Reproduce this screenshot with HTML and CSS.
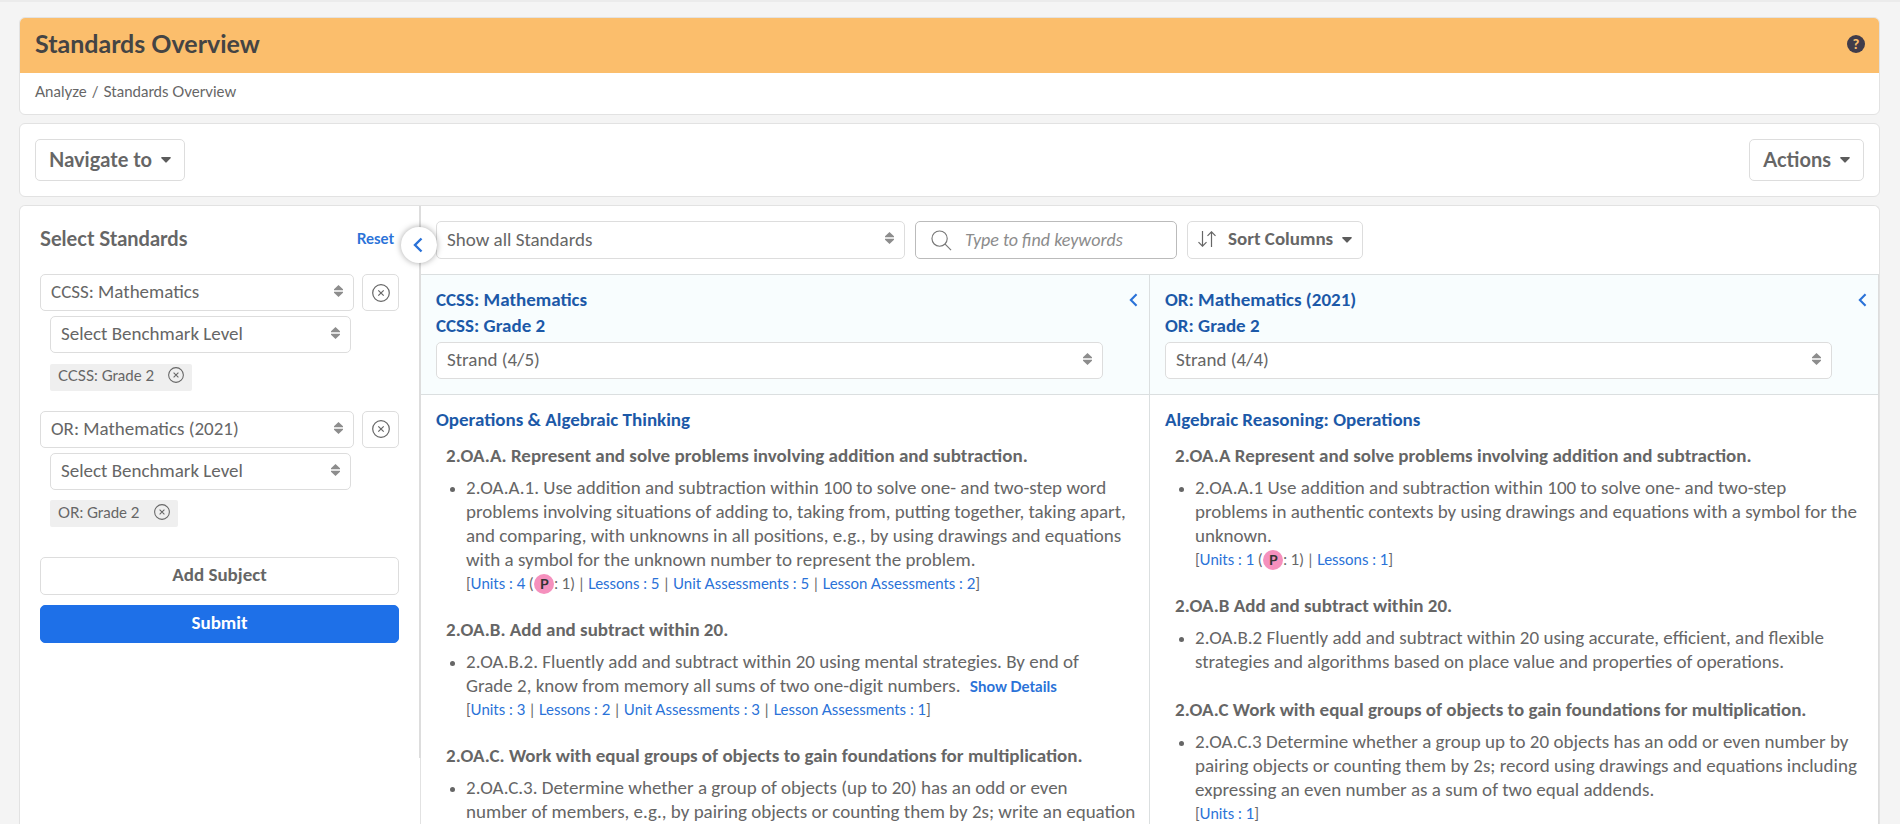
FILE: index.html
```html
<!DOCTYPE html>
<html lang="en">
<head>
<meta charset="utf-8">
<title>Standards Overview</title>
<link rel="stylesheet" href="styles.css">
</head>
<body>
<svg class="defs" aria-hidden="true">
  <symbol id="sort" viewBox="0 0 9 12"><path d="M4.500 0 9 4.200V5.200H0V4.200ZM0 6.800H9V7.800L4.500 12 0 7.800Z" fill="#8d8d8d"/></symbol>
  <symbol id="caret" viewBox="0 0 10 6"><path d="M0.800 0H9.200Q10.300 0.200 9.500 1.200L5.700 5.300Q5 6 4.300 5.300L0.500 1.200Q-0.300 0.200 0.800 0Z" fill="#5c5c5c"/></symbol>
  <symbol id="left" viewBox="0 0 10 16"><path d="M8.500 1.500 2 8 8.500 14.500" fill="none" stroke="#2a72d8" stroke-width="2.400"/></symbol>
  <symbol id="close" viewBox="0 0 18 18"><circle cx="9" cy="9" r="8.300" fill="none" stroke="#666" stroke-width="1.200"/><path d="M6.300 6.300 11.700 11.700M11.700 6.300 6.300 11.700" stroke="#666" stroke-width="1.200"/></symbol>
</svg>
<main class="page">
  <header class="card">
    <div class="title-bar">
      <h1>Standards Overview</h1>
      <button class="help" aria-label="Help">?</button>
    </div>
    <nav class="crumbs"><a href="#">Analyze</a><span>/</span><span>Standards Overview</span></nav>
  </header>

  <section class="card actions">
    <button class="btn btn-large">Navigate to <svg class="caret"><use href="#caret"/></svg></button>
    <button class="btn btn-large">Actions <svg class="caret"><use href="#caret"/></svg></button>
  </section>

  <section class="card workspace">
    <aside class="sidebar">
      <button class="collapse" aria-label="Collapse panel"><svg class="chev"><use href="#left"/></svg></button>
      <div class="side-head"><h2>Select Standards</h2><a href="#">Reset</a></div>
      <div class="subject">
        <div class="subject-row">
          <div class="select"><select aria-label="Subject 1"><option>CCSS: Mathematics</option></select><svg><use href="#sort"/></svg></div>
          <button class="btn remove" aria-label="Remove subject"><svg><use href="#close"/></svg></button>
        </div>
        <div class="select level"><select aria-label="Benchmark level 1"><option>Select Benchmark Level</option></select><svg><use href="#sort"/></svg></div>
        <div class="tag">CCSS: Grade 2 <button aria-label="Remove CCSS: Grade 2"><svg><use href="#close"/></svg></button></div>
      </div>
      <div class="subject">
        <div class="subject-row">
          <div class="select"><select aria-label="Subject 2"><option>OR: Mathematics (2021)</option></select><svg><use href="#sort"/></svg></div>
          <button class="btn remove" aria-label="Remove subject"><svg><use href="#close"/></svg></button>
        </div>
        <div class="select level"><select aria-label="Benchmark level 2"><option>Select Benchmark Level</option></select><svg><use href="#sort"/></svg></div>
        <div class="tag">OR: Grade 2 <button aria-label="Remove OR: Grade 2"><svg><use href="#close"/></svg></button></div>
      </div>
      <div class="side-buttons">
        <button class="btn">Add Subject</button>
        <button class="btn primary">Submit</button>
      </div>
    </aside>

    <div class="content">
      <div class="toolbar">
        <div class="select filter"><select aria-label="Filter standards"><option>Show all Standards</option></select><svg><use href="#sort"/></svg></div>
        <label class="search">
          <svg viewBox="0 0 22 22"><circle cx="9" cy="9" r="8" fill="none" stroke="#777" stroke-width="1.200"/><path d="M14.800 14.800 21 21" stroke="#777" stroke-width="1.200"/></svg>
          <input type="text" placeholder="Type to find keywords" aria-label="Find keywords">
        </label>
        <button class="btn sort-btn">
          <svg class="updown" viewBox="0 0 18 16"><path d="M4.500 0V15M0.500 11.200 4.500 15.200 8.500 11.200M13.500 16V1M9.500 4.800 13.500 0.800 17.500 4.800" fill="none" stroke="#666" stroke-width="1.200"/></svg>
          Sort Columns <svg class="caret"><use href="#caret"/></svg>
        </button>
      </div>

      <div class="columns">
        <section class="column">
          <div class="col-head">
            <div class="col-title"><h3>CCSS: Mathematics<br>CCSS: Grade 2</h3><button aria-label="Collapse column"><svg class="chev-sm"><use href="#left"/></svg></button></div>
            <div class="select strand"><select aria-label="CCSS strand"><option>Strand (4/5)</option></select><svg><use href="#sort"/></svg></div>
          </div>
          <div class="col-body">
            <h3>Operations &amp; Algebraic Thinking</h3>
            <h4>2.OA.A. Represent and solve problems involving addition and subtraction.</h4>
            <ul><li>2.OA.A.1. Use addition and subtraction within 100 to solve one- and two-step word problems involving situations of adding to, taking from, putting together, taking apart, and comparing, with unknowns in all positions, e.g., by using drawings and equations with a symbol for the unknown number to represent the problem.
              <p class="links">[<a href="#">Units : 4</a> (<b class="badge">P</b>: 1) <i>|</i> <a href="#">Lessons : 5</a> <i>|</i> <a href="#">Unit Assessments : 5</a> <i>|</i> <a href="#">Lesson Assessments : 2</a>]</p></li></ul>
            <h4>2.OA.B. Add and subtract within 20.</h4>
            <ul><li>2.OA.B.2. Fluently add and subtract within 20 using mental strategies. By end of Grade&nbsp;2, know from memory all sums of two one-digit numbers. <a class="details" href="#">Show Details</a>
              <p class="links">[<a href="#">Units : 3</a> <i>|</i> <a href="#">Lessons : 2</a> <i>|</i> <a href="#">Unit Assessments : 3</a> <i>|</i> <a href="#">Lesson Assessments : 1</a>]</p></li></ul>
            <h4>2.OA.C. Work with equal groups of objects to gain foundations for multiplication.</h4>
            <ul><li>2.OA.C.3. Determine whether a group of objects (up to 20) has an odd or even number&nbsp;of members, e.g., by pairing objects or counting them by 2s; write an equation</li></ul>
          </div>
        </section>
        <section class="column">
          <div class="col-head">
            <div class="col-title"><h3>OR: Mathematics (2021)<br>OR: Grade 2</h3><button aria-label="Collapse column"><svg class="chev-sm"><use href="#left"/></svg></button></div>
            <div class="select strand"><select aria-label="OR strand"><option>Strand (4/4)</option></select><svg><use href="#sort"/></svg></div>
          </div>
          <div class="col-body">
            <h3>Algebraic Reasoning: Operations</h3>
            <h4>2.OA.A Represent and solve problems involving addition and subtraction.</h4>
            <ul><li>2.OA.A.1 Use addition and subtraction within 100 to solve one- and two-step problems&nbsp;in authentic contexts by using drawings and equations with a symbol for the unknown.
              <p class="links">[<a href="#">Units : 1</a> (<b class="badge">P</b>: 1) <i>|</i> <a href="#">Lessons : 1</a>]</p></li></ul>
            <h4>2.OA.B Add and subtract within 20.</h4>
            <ul><li>2.OA.B.2 Fluently add and subtract within 20 using accurate, efficient, and flexible strategies and algorithms based on place value and properties of operations.</li></ul>
            <h4>2.OA.C Work with equal groups of objects to gain foundations for multiplication.</h4>
            <ul><li>2.OA.C.3 Determine whether a group up to 20 objects has an odd or even number by pairing objects or counting them by 2s; record using drawings and equations including expressing an even number as a sum of two equal addends.
              <p class="links">[<a href="#">Units : 1</a>]</p></li></ul>
          </div>
        </section>
      </div>
    </div>
  </section>
</main>
</body>
</html>
```
FILE: styles.css
```css
* { box-sizing: border-box; }
html { height: 100%; overflow: hidden; }
body {
  margin: 0;
  height: 100%;
  overflow: hidden;
  background: #f4f4f4;
  border-top: 2px solid #ebebeb;
  color: #666;
  font: 19px/24px Carlito, Lato, "Open Sans", sans-serif;
}
button, input, select { font: inherit; color: inherit; margin: 0; }
button { cursor: pointer; }
h1, h2, h3, h4, p, ul { margin: 0; padding: 0; }
a { color: #2a72d8; text-decoration: none; }
.defs { position: absolute; width: 0; height: 0; }

.page {
  height: 100%;
  padding: 15px 20px 0 19px;
  display: flex;
  flex-direction: column;
  gap: 8px;
}
.card {
  background: #fff;
  border: 1px solid #e2e2e2;
  border-radius: 6px;
  flex: none;
}

h1, .help, .crumbs, .btn-large, .side-head, .tag, .links, .details { font-family: Lato, "Open Sans", sans-serif; }

.title-bar {
  height: 55px;
  padding: 0 14px 3px 15px;
  display: flex;
  align-items: center;
  justify-content: space-between;
  background: #fbbe6c;
  border-radius: 5px 5px 0 0;
}
h1 { font-size: 25px; line-height: 30px; padding-bottom: 2px; color: #444; }
.help {
  width: 18px;
  height: 18px;
  padding: 0;
  border: 0;
  border-radius: 50%;
  background: #403c4a;
  color: #fbbe6c;
  font-size: 14px;
  line-height: 18px;
  font-weight: 900;
}
.crumbs {
  display: flex;
  gap: 5px;
  padding: 8px 15px 13px;
  font-size: 15px;
  line-height: 20px;
}
.crumbs a { color: inherit; }

.btn {
  display: flex;
  align-items: center;
  justify-content: center;
  height: 38px;
  padding: 0 12px 2px;
  border: 1px solid #ddd;
  border-radius: 5px;
  background: #fff;
  font-weight: 700;
}
.caret { width: 10px; height: 6px; margin: 2px 0 0 9px; }
.actions {
  display: flex;
  justify-content: space-between;
  padding: 15px;
}
.btn-large { height: 42px; padding: 0 13px 2px; font-size: 20px; }

.workspace {
  flex: 1;
  min-height: 0;
  display: flex;
  border-bottom: 0;
  border-radius: 6px 6px 0 0;
}
.sidebar {
  position: relative;
  width: 401px;
  height: 552px;
  flex: none;
  padding: 20px 20px 0;
  border-right: 2px solid #ddd;
}
.collapse {
  position: absolute;
  top: 21px;
  right: -18px;
  z-index: 2;
  width: 36px;
  height: 36px;
  padding: 0 2px 0 0;
  display: grid;
  place-items: center;
  border: 0;
  border-radius: 50%;
  background: #fff;
  box-shadow: 0 0 6px rgba(0, 0, 0, .35);
}
.chev { width: 10px; height: 16px; }
.side-head {
  display: flex;
  justify-content: space-between;
  align-items: center;
  padding-right: 5px;
  margin-bottom: 24px;
}
.side-head h2 { font-size: 20px; line-height: 24px; }
.side-head a { font-size: 15px; font-weight: 700; }

.select { position: relative; }
.select select {
  display: block;
  width: 100%;
  height: 37px;
  padding: 0 28px 1px 10px;
  border: 1px solid #ddd;
  border-radius: 5px;
  background: #fff;
  appearance: none;
}
.select svg {
  position: absolute;
  right: 11px;
  top: 11px;
  width: 9px;
  height: 12px;
  pointer-events: none;
}
.subject { margin-bottom: 20px; }
.subject-row { display: flex; gap: 8px; }
.subject-row .select { flex: 1; }
.remove { width: 37px; height: 37px; padding: 0; }
.remove svg { width: 18px; height: 18px; }
.level { margin: 5px 48px 10px 10px; }
.tag {
  display: inline-flex;
  align-items: center;
  gap: 14px;
  height: 27px;
  margin-left: 10px;
  padding: 0 8px 4px;
  background: #efefef;
  border-radius: 2px;
  font-size: 15px;
}
.tag button { display: flex; padding: 0; border: 0; background: none; }
.tag svg { width: 16px; height: 16px; }
.side-buttons { display: grid; gap: 10px; padding-top: 10px; }
.primary { border-color: #1e70e8; background: #1e70e8; color: #fff; }

.content { flex: 1; min-width: 0; display: flex; flex-direction: column; border-left: 1px solid #e2e2e2; margin-left: -1px; }
.toolbar { display: flex; gap: 10px; padding: 15px; }
.toolbar select { height: 38px; }
.filter { width: 469px; }
.search {
  display: flex;
  align-items: center;
  gap: 13px;
  width: 262px;
  height: 38px;
  padding: 0 15px;
  border: 1px solid #bbb;
  border-radius: 5px;
}
.search svg { width: 21px; height: 21px; flex: none; }
.search input { flex: 1; min-width: 0; padding: 0; border: 0; outline: 0; background: none; font-size: 18px; font-style: italic; }
.search input::placeholder { color: #8c8c8c; }
.sort-btn { padding: 0 10px 2px; }
.updown { width: 18px; height: 16px; margin-right: 12px; }

.columns { flex: 1; display: flex; border-right: 1px solid #ddd; }
.column { flex: 1; min-width: 0; border-top: 1px solid #dbdfe0; }
.column + .column { border-left: 1px solid #dbdfe0; }
.col-head {
  height: 120px;
  padding: 12px 11px 0 15px;
  background: #f8fdfe;
  border-bottom: 1px solid #dbdfe0;
}
.col-title { display: flex; justify-content: space-between; align-items: flex-start; }
.col-title button { display: flex; padding: 6px 0; border: 0; background: none; }
.chev-sm { width: 9px; height: 14px; }
h3 { font-size: 19px; line-height: 26px; color: #1c59a8; }
.strand { margin: 3px 35px 0 0; }
.col-body { padding: 12px 12px 0 15px; }
h4 { margin: 11px 0 8px 10px; font-size: 19px; line-height: 24px; }
ul { list-style: none; padding-left: 30px; margin-bottom: 24px; }
li { position: relative; }
li::before {
  content: "";
  position: absolute;
  left: -16px;
  top: 11px;
  width: 5px;
  height: 5px;
  border-radius: 50%;
  background: #666;
}
.links { font-size: 15px; line-height: 22px; }
.links i { font-style: normal; margin: 0 1px; }
.details { margin-left: 5px; font-size: 15px; line-height: 20px; font-weight: 700; }
.badge {
  display: inline-block;
  width: 20px;
  height: 20px;
  margin: -2px 0 -2px 1px;
  border-radius: 50%;
  background: #f590bd;
  color: #333;
  font-size: 14px;
  line-height: 20px;
  text-align: center;
}
```
